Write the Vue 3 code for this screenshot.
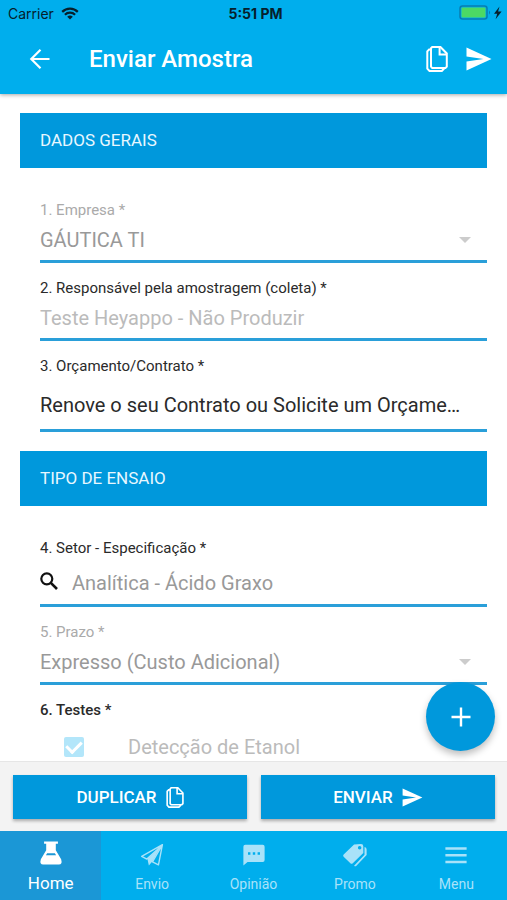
<template>
    <div class="app">
        <header class="app-header">
            <div class="status-bar">
                <div class="status-left">
                    <span>Carrier</span>
                    <svg class="icon-wifi" viewBox="0 0 18 13" aria-hidden="true">
                        <path d="M1.2 4.9a11 11 0 0 1 15.6 0" />
                        <path d="M3.9 7.7a7.2 7.2 0 0 1 10.2 0" />
                        <path class="dot" d="M9 12.6 6.2 9.8a4 4 0 0 1 5.6 0z" />
                    </svg>
                </div>
                <div class="status-time">5:51 PM</div>
                <div class="status-right">
                    <svg class="icon-battery" viewBox="0 0 44 16" aria-hidden="true">
                        <rect x="1" y="1" width="27" height="13" rx="2.5" fill="none" stroke="#087db0" stroke-width="1.5" />
                        <rect x="2.5" y="2.5" width="24" height="10" rx="1" fill="#4cd964" />
                        <path d="M30 5.5q2.2 2 0 4z" fill="#087db0" />
                        <path d="M40.5 1.5 35 8.8h3.2l-1.6 5.4 6-7.6h-3.5z" fill="#06202c" />
                    </svg>
                </div>
            </div>
            <div class="toolbar">
                <button class="icon-btn back-btn" type="button" aria-label="Voltar">
                    <svg viewBox="0 0 22 22" width="22" height="22" aria-hidden="true">
                        <path d="M20.5 11H2.5M11.5 1.8 2.3 11l9.2 9.2" fill="none" stroke="currentColor" stroke-width="2.2" />
                    </svg>
                </button>
                <h1 class="page-title">Enviar Amostra</h1>
                <button class="icon-btn" type="button" aria-label="Duplicar amostra">
                    <svg class="icon-copy" viewBox="0 0 22 26" aria-hidden="true">
                        <path d="M5 2.2 6.2 1h8.3l6.3 6.5v13.1l-1.3 1.3H6.2L5 20.7z" />
                        <path d="M13.6 1.2v7.2h7M4.8 3.6H3.1L1.3 5.4v17.2l2.2 2.3h12.3l1.9-1.9v-1" />
                    </svg>
                </button>
                <button class="icon-btn" type="button" aria-label="Enviar amostra">
                    <svg class="icon-send" viewBox="0 0 26 24" aria-hidden="true">
                        <path d="M.5.5 25.5 12 .5 23.5v-9L17.500 12 .5 9.500z" />
                    </svg>
                </button>
            </div>
        </header>

        <main class="content">
            <form id="sample-form" class="form" @submit.prevent>
                <h2 class="section-title">DADOS GERAIS</h2>
                <div class="fields">
                    <div class="field disabled">
                        <label for="empresa">1. Empresa *</label>
                        <div class="control">
                            <select id="empresa" disabled>
                                <option>GÁUTICA TI</option>
                            </select>
                            <span class="caret"></span>
                        </div>
                    </div>
                    <div class="field">
                        <label for="responsavel">2. Responsável pela amostragem (coleta) *</label>
                        <div class="control">
                            <input id="responsavel" type="text" placeholder="Teste Heyappo - Não Produzir" />
                        </div>
                    </div>
                    <div class="field">
                        <label for="contrato">3. Orçamento/Contrato *</label>
                        <div class="control tall">
                            <select id="contrato">
                                <option>Renove o seu Contrato ou Solicite um Orçame…</option>
                            </select>
                        </div>
                    </div>
                </div>

                <h2 class="section-title">TIPO DE ENSAIO</h2>
                <div class="fields">
                    <div class="field">
                        <label for="setor">4. Setor - Especificação *</label>
                        <div class="control search">
                            <svg class="icon-search" viewBox="0 0 18 18" aria-hidden="true">
                                <circle cx="6.8" cy="6.800" r="5.500" fill="none" stroke="currentColor" stroke-width="2.200" />
                                <path d="m10.600 10.600 6.400 6.400" stroke="currentColor" stroke-width="2.600" />
                            </svg>
                            <input id="setor" v-model="setor" type="text" />
                        </div>
                    </div>
                    <div class="field disabled">
                        <label for="prazo">5. Prazo *</label>
                        <div class="control">
                            <select id="prazo" disabled>
                                <option>Expresso (Custo Adicional)</option>
                            </select>
                            <span class="caret"></span>
                        </div>
                    </div>
                    <fieldset class="tests">
                        <legend>6. Testes *</legend>
                        <div class="test">
                            <input id="etanol" type="checkbox" checked disabled />
                            <label for="etanol">Detecção de Etanol</label>
                        </div>
                    </fieldset>
                </div>
            </form>
            <button class="fab" type="button" aria-label="Adicionar">
                <svg viewBox="0 0 20 20" width="20" height="20" aria-hidden="true">
                    <path d="M10 .5v19M.5 10h19" stroke="currentColor" stroke-width="2.4" />
                </svg>
            </button>
        </main>

        <footer class="actions">
            <button class="action-btn" type="button">
                DUPLICAR
                <svg class="icon-copy" viewBox="0 0 22 26" aria-hidden="true">
                    <path d="M5 2.2 6.2 1h8.3l6.3 6.5v13.1l-1.3 1.3H6.2L5 20.7z" />
                    <path d="M13.6 1.2v7.2h7M4.8 3.6H3.1L1.3 5.4v17.2l2.2 2.3h12.3l1.9-1.9v-1" />
                </svg>
            </button>
            <button class="action-btn" type="submit" form="sample-form">
                ENVIAR
                <svg class="icon-send" viewBox="0 0 26 24" aria-hidden="true">
                    <path d="M.5.5 25.5 12 .5 23.5v-9L17.5 12 .5 9.5z" />
                </svg>
            </button>
        </footer>

        <nav class="tabs">
            <a
                v-for="tab in tabs"
                :key="tab.id"
                :href="'#' + tab.id"
                class="tab"
                :class="{ active: activeTab === tab.id }"
                @click.prevent="activeTab = tab.id"
            >
                <svg class="tab-icon" viewBox="0 0 26 26" aria-hidden="true">
                    <template v-if="tab.id === 'home'">
                        <path d="M5.500.5h15v2.600h-2.300v7l5.800 9.700q1.600 5.700-2.500 5.700h-17q-4.100 0-2.500-5.700l5.800-9.700v-7H5.500z" />
                        <path d="M8.800 13.200h8.400l1.300 2.300h-11z" fill="#1b97d6" />
                    </template>
                    <template v-else-if="tab.id === 'envio'">
                        <path d="M24.300 1.800 1.800 14.500l5.600 2.900L23 3.300zM24.300 1.800 20 23.600l-6.500-3.200z" fill="none" stroke="currentColor" stroke-width="1.500" stroke-linejoin="round" />
                        <path d="M22.500 3.800 8 17l1.600 7.300 4-4.600z" />
                    </template>
                    <path
                        v-else-if="tab.id === 'opiniao'"
                        fill-rule="evenodd"
                        d="M3.500 2h19q2 0 2 2v14.500q0 2-2 2H6L1.500 24.500V4q0-2 2-2zM6.500 10v2.600h2.600V10zM11.700 10v2.600h2.600V10zM16.900 10v2.600h2.600V10z"
                    />
                    <template v-else-if="tab.id === 'promo'">
                        <path
                            fill-rule="evenodd"
                            d="M12 1.500 19.500 1q2.500 0 2.500 2.500v7.200L10.600 22q-1.300 1.100-2.600 0L.7 15q-1.200-1.200 0-2.500zM18 3.200a1.900 1.900 0 1 0 .1 3.800 1.900 1.900 0 0 0-.1-3.800z"
                        />
                        <path d="M23.300 4.300q2.300.5 2.300 2.700v6L14.300 24.800q-1.100 1-2.300-.2l11.300-12z" />
                    </template>
                    <path v-else d="M1.500 4.600h23v2.800h-23zM1.500 11.900h23v2.800h-23zM1.500 19.200h23V22h-23z" />
                </svg>
                <span class="tab-label">{{ tab.label }}</span>
            </a>
        </nav>
    </div>
</template>

<script setup>
import { ref } from 'vue';

const setor = ref('Analítica - Ácido Graxo');
const activeTab = ref('home');

const tabs = [
    { id: 'home', label: 'Home' },
    { id: 'envio', label: 'Envio' },
    { id: 'opiniao', label: 'Opinião' },
    { id: 'promo', label: 'Promo' },
    { id: 'menu', label: 'Menu' }
];
</script>

<style scoped>
.app {
    display: flex;
    flex-direction: column;
    height: 100vh;
    background: #fff;
    color: #2a2a2a;
    font-family: Roboto, "Liberation Sans", sans-serif;
    overflow: hidden;
}

.app * {
    box-sizing: border-box;
}

button,
input,
select {
    margin: 0;
    padding: 0;
    border: 0;
    font-family: inherit;
}

.app-header {
    position: relative;
    z-index: 1;
    background: #00aeed;
    box-shadow: 0 1px 4px rgba(0, 0, 0, 0.35);
}

.status-bar {
    display: grid;
    grid-template-columns: 1fr auto 1fr;
    align-items: center;
    height: 26px;
    padding: 0 4px 0 8px;
    color: #06202c;
    font-family: Inter, sans-serif;
    font-size: 14px;
}

.status-left {
    display: flex;
    align-items: center;
    gap: 7px;
}

.status-time {
    font-weight: 700;
}

.status-right {
    display: flex;
    justify-content: flex-end;
}

.icon-wifi {
    width: 18px;
    height: 13px;
    fill: none;
    stroke: currentColor;
    stroke-width: 2.2;
}

.icon-wifi .dot {
    fill: currentColor;
    stroke: none;
}

.icon-battery {
    width: 44px;
    height: 16px;
}

.toolbar {
    display: flex;
    align-items: center;
    gap: 18px;
    height: 68px;
    padding: 0 15px 2px 29px;
    color: #fff;
}

.page-title {
    flex: 1;
    margin: 0 0 0 20px;
    font-size: 24px;
    font-weight: 500;
}

.icon-btn {
    display: flex;
    background: none;
    color: inherit;
    cursor: pointer;
}

.icon-copy {
    width: 22px;
    height: 26px;
    fill: none;
    stroke: currentColor;
    stroke-width: 2;
}

.icon-send {
    width: 26px;
    height: 24px;
    fill: currentColor;
}

.content {
    position: relative;
    flex: 1;
    min-height: 0;
}

.form {
    height: 100%;
    padding: 19px 20px 0;
    overflow: hidden;
}

.section-title {
    margin: 0;
    padding: 0 20px;
    background: #0098dc;
    color: #e8f7ff;
    font-size: 17px;
    font-weight: 400;
    line-height: 55px;
}

.fields {
    padding: 17px 0 0 20px;
}

.fields + .section-title {
    margin-top: 19px;
}

.field {
    padding-top: 15px;
    border-bottom: 3px solid #2a9fd9;
}

.field label,
.tests legend {
    display: block;
    padding: 0;
    font-size: 15px;
    line-height: 20px;
}

.field.disabled label {
    color: #aaa;
}

.control {
    display: flex;
    align-items: center;
    height: 40px;
}

.control.tall {
    height: 53px;
    padding-top: 5px;
}

.control.search {
    gap: 14px;
    height: 46px;
    padding-top: 4px;
}

.control input,
.control select {
    flex: 1;
    min-width: 0;
    height: 30px;
    appearance: none;
    background: none;
    color: #2a2a2a;
    font-size: 20px;
    opacity: 1;
    outline: none;
}

.control select:disabled,
.control.search input {
    color: #999;
}

.control input::placeholder {
    color: #bbb;
}

.caret {
    margin-right: 16px;
    border: 6px solid transparent;
    border-top-color: #ccc;
    border-bottom: 0;
}

.icon-search {
    width: 18px;
    height: 18px;
    margin-bottom: 4px;
    color: #111;
}

.tests {
    margin: 0;
    padding: 15px 0 0;
    border: 0;
}

.tests legend {
    float: left;
    width: 100%;
    font-weight: 500;
}

.test {
    display: flex;
    clear: both;
    align-items: center;
    gap: 44px;
    height: 54px;
    padding-left: 24px;
    color: #bbb;
    font-size: 20px;
}

.test input {
    display: grid;
    place-content: center;
    width: 20px;
    height: 20px;
    border-radius: 2px;
    appearance: none;
    background: #b3e6fa;
}

.test input::after {
    content: "";
    width: 7px;
    height: 12px;
    margin-bottom: 3px;
    border: solid #fff;
    border-width: 0 3px 3px 0;
    transform: rotate(45deg);
}

.fab {
    position: absolute;
    right: 12px;
    bottom: 10px;
    display: flex;
    align-items: center;
    justify-content: center;
    width: 69px;
    height: 69px;
    border-radius: 50%;
    background: #0098dc;
    box-shadow: 0 4px 7px rgba(0, 0, 0, 0.25);
    color: #fff;
    cursor: pointer;
}

.actions {
    display: flex;
    gap: 14px;
    padding: 13px 12px 12px 13px;
    border-top: 1px solid #e6e6e6;
    background: #f3f3f3;
}

.action-btn {
    display: flex;
    flex: 1;
    align-items: center;
    justify-content: center;
    gap: 9px;
    height: 44px;
    background: #0098dc;
    box-shadow: 0 2px 3px rgba(0, 0, 0, 0.3);
    color: #fff;
    font-size: 17px;
    font-weight: 500;
    cursor: pointer;
}

.action-btn .icon-copy {
    width: 18px;
    height: 21px;
}

.action-btn .icon-send {
    width: 21px;
    height: 19px;
}

.tabs {
    display: flex;
    background: #00aeed;
}

.tab {
    display: flex;
    flex: 1;
    flex-direction: column;
    align-items: center;
    justify-content: flex-end;
    gap: 7px;
    height: 69px;
    padding-bottom: 6px;
    color: #a9e2f9;
    font-size: 14px;
    line-height: 20px;
    text-decoration: none;
}

.tab.active {
    background: #1b97d6;
    color: #fff;
    font-size: 17px;
    line-height: 22px;
}

.tab-icon {
    width: 26px;
    height: 24px;
    fill: currentColor;
}
</style>

<style>
body {
    margin: 0;
}
</style>
